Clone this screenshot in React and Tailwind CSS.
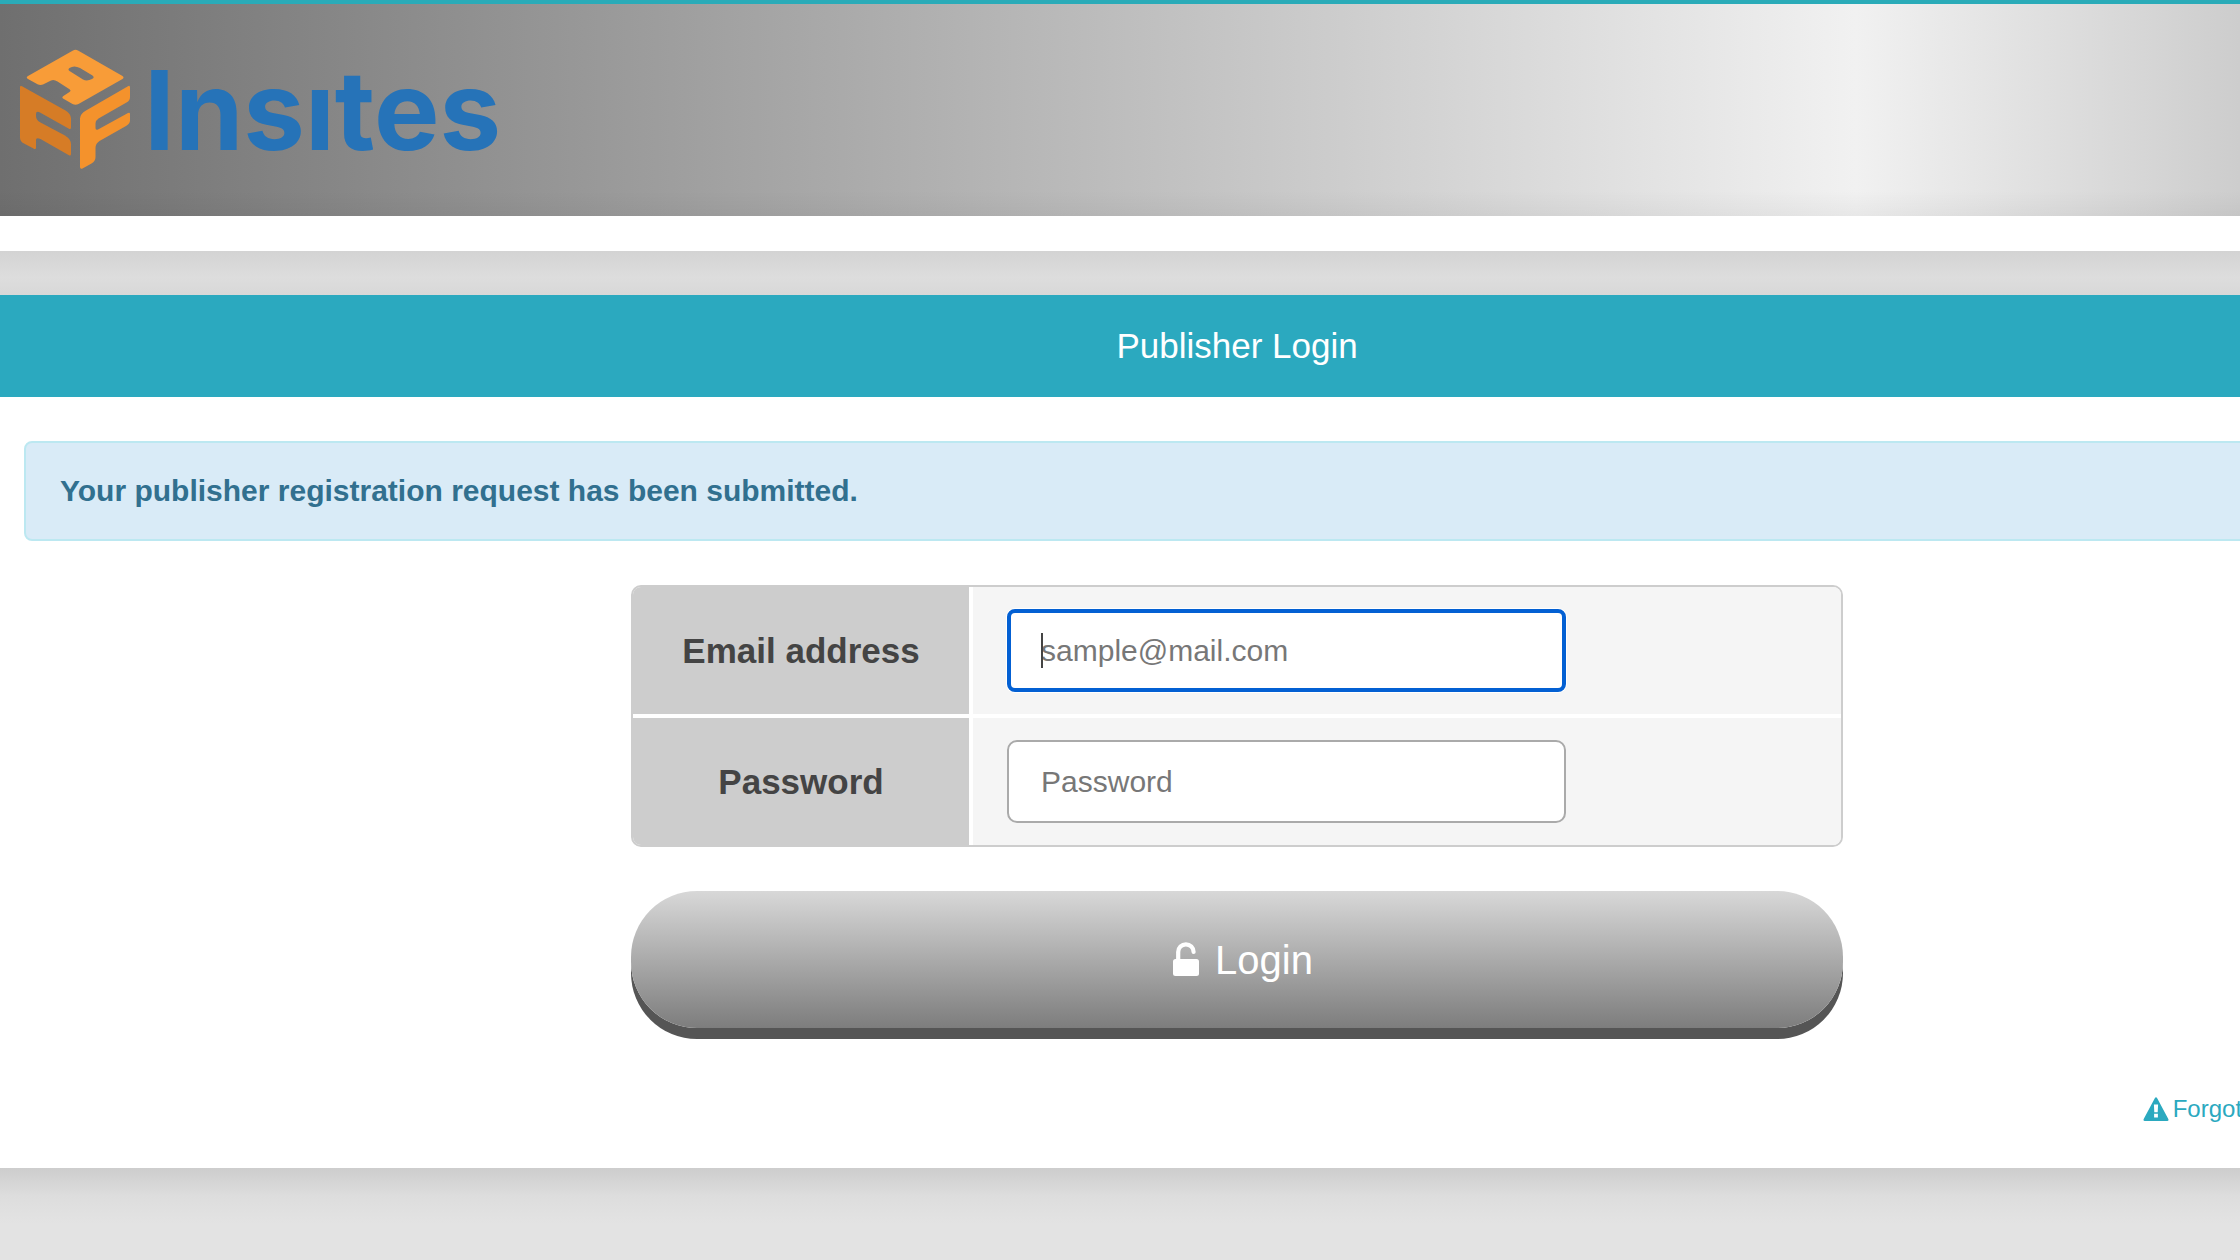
import React, { useState } from 'react';

const CubeLogo = () => (
  <svg viewBox="0 0 112 122" className="h-[122px] w-28 shrink-0" aria-hidden="true">
    <path
      fill="#f89c38"
      fillRule="evenodd"
      d="M53 1.600Q55.500 0 58 1.600L102.500 27Q104.500 28.500 102.500 30L58.500 55Q55.500 56.500 52.500 55L43 49.500Q41.500 48.500 43 47.200L49.500 43Q51.500 41.500 49.500 40.200L37.500 32.500Q33 29.500 29 32.500L23.500 35.200Q20.500 36.600 17.500 35.200L8 30Q5.500 28.500 8 27ZM60 19Q54 16 49.500 19Q47.500 20.500 49.500 22L63 30.500Q67 32.500 72 30Q75 28.500 72.500 26.500Z"
    />
    <path
      fill="#d67c26"
      d="M0 38.500Q0 36 2 37.200L45.500 61.500Q51 65 51 69.500V78.500Q51 81 48.500 79.500L20 63.500Q16 61.500 16 65V67Q16 71 20.500 73.500L45 86.500Q51 90.500 51 95V105Q51 107.500 48.500 106L20.500 90Q16 88 16 91V98.500Q16 101 13.500 99.500L4 94.500Q0 92.500 0 88.500Z"
    />
    <path
      fill="#f4922c"
      d="M110 38.500Q110 36 108 37.200L66 61.500Q60 65 60 69.500V118Q60 120.500 62.500 119.500L71.500 114.500Q75.500 112 75.500 108V99Q75.500 94.500 79.500 92L106 77Q110 74.500 110 71.500V65Q110 63 108 64L78 80.500Q75.500 81.500 75.500 79V74.500Q75.500 71.500 78.500 69.500L106.500 53.500Q110 51.500 110 48Z"
    />
  </svg>
);

const UnlockIcon = () => (
  <svg viewBox="0 0 26 36" className="h-9 w-[26px] shrink-0" aria-hidden="true">
    <path d="M5.200 18V10A7.700 7.700 0 0 1 20.600 10" fill="none" stroke="currentColor" strokeWidth="4.200" strokeLinecap="round" />
    <rect x="0" y="17" width="26" height="17" rx="2.500" fill="currentColor" />
  </svg>
);

const WarningIcon = () => (
  <svg viewBox="0 0 26 24" className="h-6 w-[26px] shrink-0" aria-hidden="true">
    <path
      fill="currentColor"
      fillRule="evenodd"
      d="M11.800 1.200Q13 -0.600 14.200 1.200L25.300 22Q26 24 24.200 24H1.800Q0 24 0.700 22ZM10.900 7.600L11.300 15.200H14.700L15.100 7.600ZM11.100 16.800V20.500H14.900V16.800Z"
    />
  </svg>
);

const Field = ({ id, label, children }) => (
  <div className="flex h-[127px]">
    <label
      htmlFor={id}
      className="flex w-[336px] shrink-0 items-center justify-center bg-[#cdcdcd] text-[35px]/10 font-bold text-[#444]"
    >
      {label}
    </label>
    <div className="ml-1 flex grow items-center bg-[#f5f5f5] px-[34px]">{children}</div>
  </div>
);

const App = () => {
  const [email, setEmail] = useState('');
  const [password, setPassword] = useState('');

  return (
    <div className="min-h-screen overflow-x-hidden bg-[#e3e3e3] font-['Liberation_Sans',Arial,sans-serif]">
      {/* page is a little wider than the window */}
      <div className="w-[110.45%]">
        <header className="border-t-4 border-[#2aabb8] bg-white pb-[35px]">
          <div className="h-[212px] bg-[linear-gradient(90deg,#6f6f6f_0%,#f1f1f1_75%,#b7b7b7_100%)]">
            <div className="flex h-full items-center bg-[linear-gradient(0deg,rgba(0,0,0,0.04),transparent_12%)] pl-5">
              <a href="#" aria-label="Insites" className="flex items-center gap-3">
                <CubeLogo />
                <span className="font-[Inter,sans-serif] text-[110px]/[116px] font-bold text-[#2673b8]">Insıtes</span>
              </a>
            </div>
          </div>
        </header>

        <div className="h-11 bg-[linear-gradient(180deg,#d3d3d3,#dddddd_60%,#d8d8d8)]" />

        <main className="bg-white pb-[43px]">
          <h1 className="flex h-[102px] items-center justify-center bg-[#2ba9bf] text-[35px]/10 text-white">
            Publisher Login
          </h1>

          <div className="px-6 pt-11">
            <div
              role="status"
              className="flex h-[100px] items-center rounded-lg border-2 border-[#bce8f1] bg-[#d9ebf7] px-[34px] text-[30px]/10 font-bold text-[#31708f]"
            >
              Your publisher registration request has been submitted.
            </div>
          </div>

          <form className="mx-auto mt-11 max-w-[1212px]" onSubmit={(e) => e.preventDefault()}>
            <div className="flex flex-col gap-1 overflow-hidden rounded-[10px] border-2 border-[#cdcdcd] bg-white">
              <Field id="email" label="Email address">
                <div className="relative">
                  <input
                    id="email"
                    type="email"
                    autoFocus
                    value={email}
                    onChange={(e) => setEmail(e.target.value)}
                    placeholder="sample@mail.com"
                    className="peer block h-[83px] w-[559px] rounded-lg border-4 border-[#0360d3] bg-white px-[30px] text-[30px] text-[#444] caret-transparent shadow-[0_0_0_1px_#fff] outline-none placeholder:text-[#777]"
                  />
                  {/* text cursor */}
                  <span className="pointer-events-none absolute inset-y-6 left-[34px] hidden w-0.5 bg-[#444] peer-placeholder-shown:block" />
                </div>
              </Field>
              <Field id="password" label="Password">
                <input
                  id="password"
                  type="password"
                  value={password}
                  onChange={(e) => setPassword(e.target.value)}
                  placeholder="Password"
                  className="h-[83px] w-[559px] rounded-[10px] border-2 border-[#aaa] bg-white px-8 text-[30px] text-[#444] outline-none placeholder:text-[#777]"
                />
              </Field>
            </div>

            <button
              type="submit"
              className="mt-11 flex h-[137px] w-full items-center justify-center gap-4 rounded-[66px] bg-[linear-gradient(180deg,#d8d8d8,#7d7d7d)] pl-3 text-[40px] text-white shadow-[0_11px_0_#555]"
            >
              <UnlockIcon />
              Login
            </button>
          </form>

          <div className="mt-[65px] flex justify-end pr-[232px]">
            <a href="#" className="flex items-center gap-1 text-2xl text-[#2ba9bf]">
              <WarningIcon />
              Forgot
            </a>
          </div>
        </main>

        <div className="h-14 bg-[linear-gradient(180deg,#cdcdcd,#dddddd_50%,#e3e3e3)]" />
      </div>
    </div>
  );
};

export default App;
